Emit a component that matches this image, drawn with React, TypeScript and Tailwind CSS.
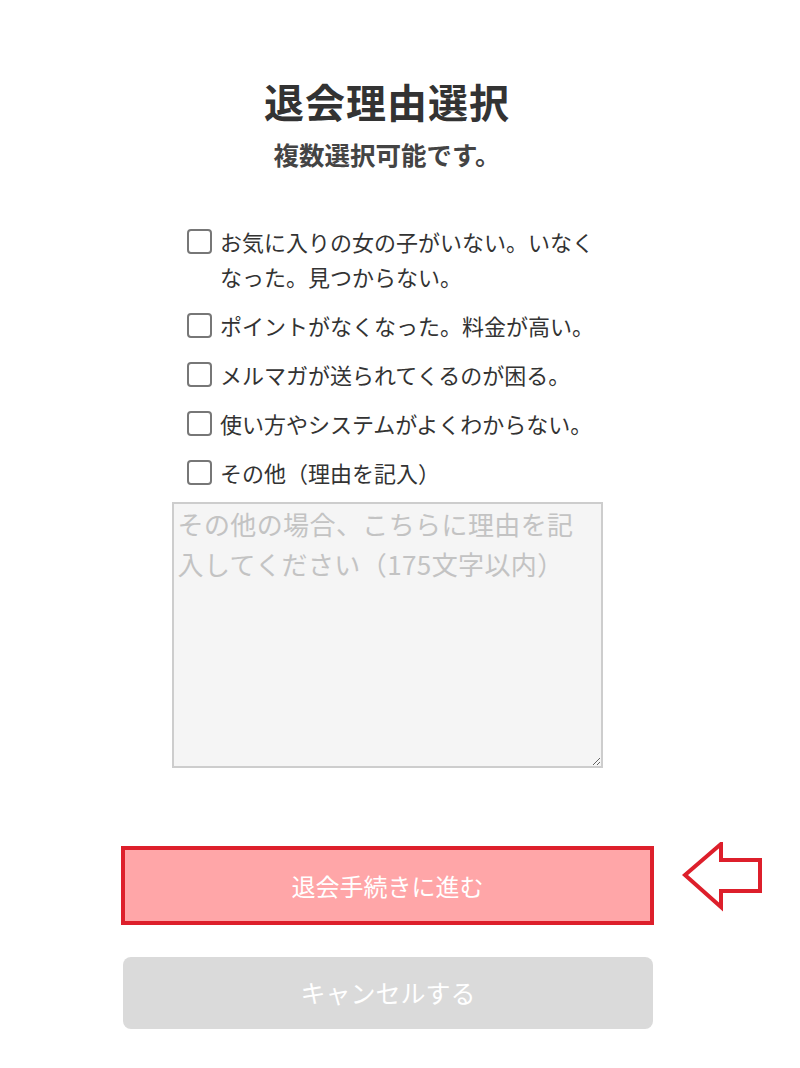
import React from "react";

const REASONS = [
  "お気に入りの女の子がいない。いなくなった。見つからない。",
  "ポイントがなくなった。料金が高い。",
  "メルマガが送られてくるのが困る。",
  "使い方やシステムがよくわからない。",
  "その他（理由を記入）",
];

const FONT = "font-['Noto_Sans_CJK_JP','Noto_Sans',sans-serif]";

export default function App() {
  return (
    <div className={`min-h-[1068px] w-[800px] bg-white text-[#333] ${FONT}`}>
      <div className="flex w-[532px] flex-col items-center ml-[121px] pt-[74px]">
        <h1 className="text-[40px] font-bold leading-[54px] tracking-[1px]">退会理由選択</h1>
        <p className="mt-[10px] text-[25.5px] font-bold leading-[32px] text-[#444]">複数選択可能です。</p>

        <ul className="mt-[54px] flex w-[414px] flex-col gap-[14px] pl-[7px]">
          {REASONS.map((r) => (
            <li className="flex items-start gap-[8px]" key={r}>
              <span className="mt-[5px] block size-[25px] shrink-0 rounded-[4px] border-2 border-[#777] bg-white" />
              <span className="w-[380px] shrink-0 text-[22px] leading-[35px]">{r}</span>
            </li>
          ))}
        </ul>

        <textarea
          className="mt-[12px] h-[266px] w-[431px] resize-y border-2 border-[#cdcdcd] bg-[#f5f5f5] pl-[4px] pr-[20px] py-0 text-[26px] leading-[40px] tracking-[0.4px] placeholder:text-[#c3c3c3] outline-none"
          placeholder="その他の場合、こちらに理由を記入してください（175文字以内）"
        />
      </div>

      <div className="mt-[78px] ml-[121px] flex items-center gap-[28px]">
        <button
          className="flex h-[79px] w-[533px] items-center justify-center border-4 border-[#dd1f2b] bg-[#ffa6a8] text-[24px] text-white"
          type="button"
        >
          退会手続きに進む
        </button>
        <svg className="mt-[-18px]" width="82" height="70" viewBox="0 0 82 70" fill="none">
          <polygon
            points="3,33 39,2 39,18 78,18 78,49 39,49 39,65"
            stroke="#dd1f2b"
            strokeWidth="4"
            strokeLinejoin="miter"
            fill="white"
          />
        </svg>
      </div>

      <div className="mt-[32px] ml-[123px]">
        <button
          className="flex h-[72px] w-[530px] items-center justify-center rounded-[8px] bg-[#dadada] text-[25px] text-white"
          type="button"
        >
          キャンセルする
        </button>
      </div>
    </div>
  );
}
